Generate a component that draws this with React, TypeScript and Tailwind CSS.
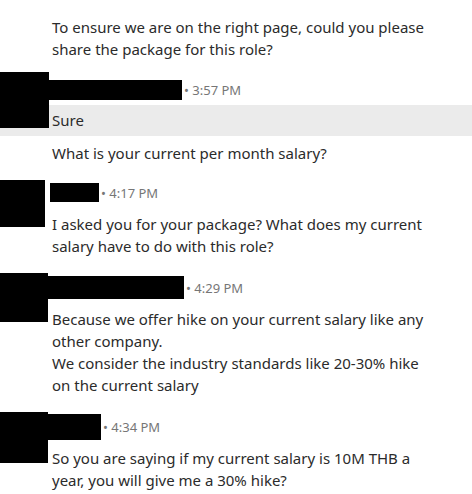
import React from "react";

const font = { fontFamily: '"Noto Sans", "Open Sans", sans-serif' };

function Header({ nameW, nameTop, nameH, nameLeft, time, avTop, avH, avW }: { nameW: number; nameTop: number; nameH: number; nameLeft: number; time: string; avTop: number; avH: number; avW: number }) {
  return (
    <div className="relative flex h-[22px] items-start">
      <div className="absolute left-0 bg-black" style={{ top: avTop, height: avH, width: avW }} />
      <span className="block shrink-0 bg-black" style={{ marginLeft: nameLeft, width: nameW, marginTop: nameTop, height: nameH }} />
      <span className="ml-[2px] text-[13px] leading-[22px] text-[#767676]">• {time}</span>
    </div>
  );
}

export default function App() {
  return (
    <div className="h-[494px] w-[472px] overflow-hidden bg-white text-[15px] leading-[22px] text-[#2b2b2b]" style={font}>
      <div className="pl-[52px] pr-4 pt-[16px]">
        To ensure we are on the right page, could you please
        <br />
        share the package for this role?
      </div>

      <div className="relative mt-[19px]">
        <Header nameLeft={49} nameW={133} nameTop={1} nameH={20} time="3:57 PM" avTop={-7} avH={56} avW={49} />
        <div className="mt-[4px] bg-[#ebebeb] pb-[5px] pl-[52px] pt-[4px]">Sure</div>
        <div className="absolute left-0 top-[-7px] h-[56px] w-[49px] bg-black" />
        <div className="mt-[6px] pl-[52px]">What is your current per month salary?</div>
      </div>

      <div className="mt-[18px]">
        <Header nameLeft={50} nameW={49} nameTop={1} nameH={19} time="4:17 PM" avTop={-2} avH={47} avW={45} />
        <div className="mt-[9px] pl-[52px]">
          I asked you for your package? What does my current
          <br />
          salary have to do with this role?
        </div>
      </div>

      <div className="mt-[20px]">
        <Header nameLeft={48} nameW={136} nameTop={-1} nameH={23} time="4:29 PM" avTop={-4} avH={49} avW={48} />
        <div className="relative mt-[9px] pl-[52px]">
          Because we offer hike on your current salary like any
          <br />
          other company.
          <br />
          We consider the industry standards like 20-30% hike
          <br />
          on the current salary
        </div>
      </div>

      <div className="mt-[20px]">
        <Header nameLeft={48} nameW={53} nameTop={-2} nameH={26} time="4:34 PM" avTop={-4} avH={51} avW={48} />
        <div className="mt-[9px] pl-[52px]">
          So you are saying if my current salary is 10M THB a
          <br />
          year, you will give me a 30% hike?
        </div>
      </div>
    </div>
  );
}
